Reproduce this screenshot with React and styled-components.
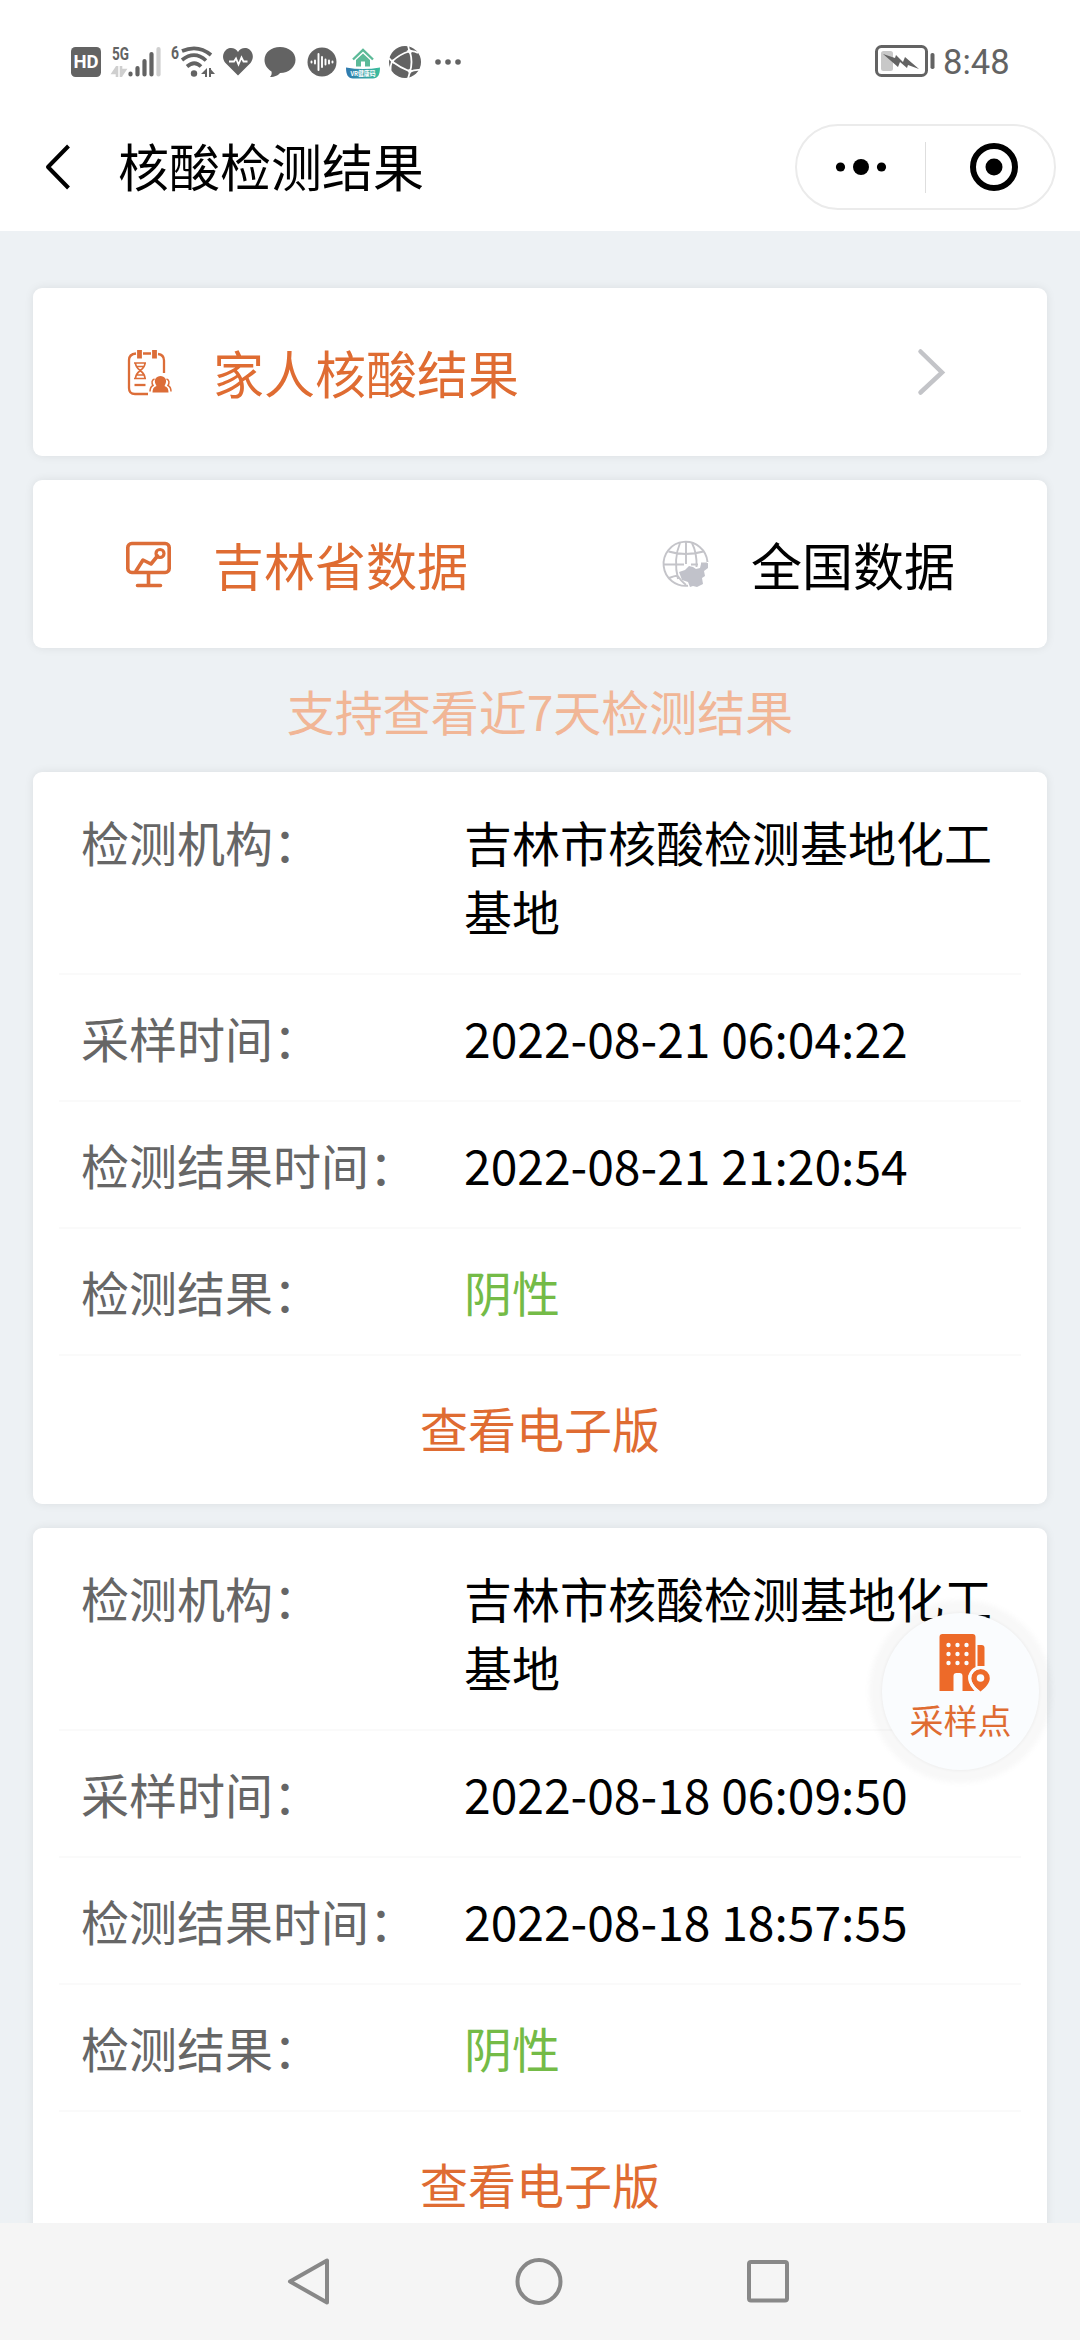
import React from 'react';
import styled, { createGlobalStyle } from 'styled-components';

const GlobalStyle = createGlobalStyle`
  * {
    box-sizing: border-box;
  }

  body {
    margin: 0;
    background: #edf1f4;
    font-family: 'Noto Sans CJK SC', 'Noto Sans', sans-serif;
  }

  svg {
    display: block;
    flex-shrink: 0;
    overflow: visible;
  }
`;

const ORANGE = '#df6c32';
const STATUS_GREY = '#636363';

const Screen = styled.div`
  width: 1080px;
  height: 2340px;
  display: flex;
  flex-direction: column;
  overflow: hidden;
`;

// Status bar
const StatusBar = styled.div`
  height: 104px;
  flex-shrink: 0;
  display: flex;
  justify-content: space-between;
  padding: 40px 70px 0 70px;
  background: #fff;
`;

const StatusGroup = styled.div`
  height: 44px;
  display: flex;
  align-items: center;
`;

const StatusItem = styled.div`
  margin-left: ${props => props.$space || 0}px;
`;

const Clock = styled.span`
  width: 67px;
  margin-left: 8px;
  font-family: Roboto, sans-serif;
  font-size: 34.5px;
  line-height: 44px;
  color: ${STATUS_GREY};
`;

// Title bar
const TitleBar = styled.header`
  height: 127px;
  flex-shrink: 0;
  display: flex;
  align-items: flex-start;
  padding: 20px 24px 0 44px;
  background: #fff;
`;

const BackIcon = styled.svg`
  margin-top: 19px;
`;

const Title = styled.h1`
  flex: 1;
  margin: 4px 0 0 46px;
  font-size: 51px;
  font-weight: 400;
  line-height: 74px;
  color: #000;
`;

const Capsule = styled.div`
  width: 261px;
  height: 86px;
  display: flex;
  align-items: center;
  border: 2px solid #ebebeb;
  border-radius: 43px;
`;

const CapsuleButton = styled.div`
  width: 128px;
  display: flex;
  justify-content: center;
  padding-left: ${props => props.$shift || 0}px;
`;

const CapsuleDivider = styled.div`
  width: 1px;
  height: 51px;
  background: #dedede;
`;

// Page content
const Content = styled.main`
  flex: 1;
  min-height: 0;
  overflow: hidden;
  padding: 57px 33px 0;
`;

const Card = styled.section`
  background: #fff;
  border-radius: 9px;
  box-shadow: 0 0 10px rgba(0, 0, 0, 0.08);
  margin-bottom: 24px;
`;

const EntryCard = styled(Card)`
  height: 168px;
  display: flex;
  align-items: center;
  padding: 0 101px 0 93px;
  margin-bottom: ${props => (props.$last ? 0 : 24)}px;
`;

const EntryText = styled.span`
  margin-left: 42px;
  font-size: 51px;
  line-height: 74px;
  white-space: nowrap;
  color: ${props => (props.$active ? ORANGE : '#000')};
`;

const Spacer = styled.div`
  flex: 1;
`;

const Tab = styled.div`
  display: flex;
  align-items: center;
  flex-shrink: 0;
  width: ${props => props.$width}px;
`;

const Tip = styled.p`
  margin: 0;
  height: 124px;
  font-size: 48px;
  line-height: 124px;
  text-align: center;
  color: #f1b696;
`;

const ResultCard = styled(Card)`
  height: 732px;
  padding: 7px 26px 0;
`;

const Row = styled.div`
  display: flex;
  align-items: flex-start;
  padding: 28px 22px 28px;
  border-bottom: 2px solid #fafafa;
`;

const Label = styled.div`
  width: 383px;
  flex-shrink: 0;
  font-size: 48px;
  line-height: 69px;
  color: #666;
`;

const Value = styled.div`
  flex: 1;
  font-size: 48px;
  line-height: 69px;
  color: ${props => (props.$negative ? '#74bb47' : '#000')};
`;

const ViewLink = styled.div`
  height: 142px;
  font-size: 48px;
  line-height: 142px;
  text-align: center;
  color: ${ORANGE};
`;

// Floating button
const Fab = styled.div`
  position: absolute;
  left: 882px;
  top: 1613px;
  width: 157px;
  height: 157px;
  display: flex;
  flex-direction: column;
  align-items: center;
  padding-top: 20px;
  border-radius: 50%;
  background: #fafcfe;
  box-shadow: 0 0 3px 1px rgba(0, 0, 0, 0.04), 0 0 5px 13px rgba(130, 140, 140, 0.06);
`;

const FabText = styled.span`
  margin-top: 2px;
  font-size: 34px;
  line-height: 49px;
  color: ${ORANGE};
`;

// System navigation
const NavBar = styled.nav`
  height: 117px;
  flex-shrink: 0;
  display: flex;
  justify-content: space-between;
  padding: 33px 286px 0 284px;
  background: #f5f5f5;
`;

const HdIcon = () => (
  <svg width="32" height="32" viewBox="0 0 32 32">
    <rect x="1" y="1" width="30" height="30" rx="4.5" fill={STATUS_GREY} />
    <text x="16" y="22" textAnchor="middle" fontFamily="Roboto, sans-serif" fontSize="18.5" fontWeight="700" fill="#fff">HD</text>
  </svg>
);

const SignalIcon = () => (
  <svg width="52" height="34" viewBox="0 0 52 34">
    <text x="1" y="15" fontFamily="Roboto, sans-serif" fontSize="18" fontWeight="700" textLength="17" lengthAdjust="spacingAndGlyphs" fill={STATUS_GREY}>5G</text>
    <path d="M6 21v11M6 22l-4 6h4M10 32V21M10 31l4-6h-4" stroke="#cfcfcf" strokeWidth="2.6" fill="none" />
    <g stroke={STATUS_GREY} strokeWidth="4.2" strokeLinecap="round">
      <path d="M19.5 28.500v1M26.500 23v6.500M33.500 16v13.500M40.500 9v20.500" />
      <path d="M47.500 4v25.500" stroke="#cfcfcf" />
    </g>
  </svg>
);

const WifiIcon = () => (
  <svg width="45" height="34" viewBox="0 0 45 34">
    <text x="0" y="14" fontFamily="Roboto, sans-serif" fontSize="18" fontWeight="700" textLength="8" lengthAdjust="spacingAndGlyphs" fill={STATUS_GREY}>6</text>
    <g fill="none" stroke={STATUS_GREY} strokeWidth="3.700">
      <path d="M11 6Q27-1 40 10" />
      <path d="M11 15Q23.500 5 35 15.500" />
      <path d="M16 21.500Q23.500 15 30 21.500" />
    </g>
    <circle cx="23" cy="28.500" r="3.200" fill={STATUS_GREY} />
    <path d="M36 23v9h-2v-3h-4zM38 23v9h2v-3h4l-4-4.500v-1.500z" fill={STATUS_GREY} />
  </svg>
);

const HeartIcon = () => (
  <svg width="32" height="30" viewBox="0 0 32 30">
    <path d="M16 28.500 3.500 16C-2 9 3 1 9 1c3 0 5.500 1.500 7 4 1.500-2.500 4-4 7-4 6 0 11 8 5.500 15z" fill={STATUS_GREY} />
    <path d="M7 14.500h5l2-3 2.500 6 3-7 2 4h4" fill="none" stroke="#fff" strokeWidth="1.800" />
  </svg>
);

const ChatIcon = () => (
  <svg width="32" height="32" viewBox="0 0 32 32">
    <path d="M16 1c9 0 15.500 5.500 15.500 12.800C31.500 21 25 27 16 27c-1.500 2-5 4-10 4 1.500-1.500 2-3.500 1.500-5.500C3.500 23 .5 19 .5 14 .5 6.500 7 1 16 1z" fill={STATUS_GREY} />
  </svg>
);

const WaveIcon = () => (
  <svg width="30" height="30" viewBox="0 0 30 30">
    <circle cx="15" cy="15" r="14.500" fill={STATUS_GREY} />
    <path d="M4.500 14.500v1M8 13.500v3M11.500 7v16M15 10v10M18.500 12.500v5M22 13.500v3M25.500 14.500v1" stroke="#fff" strokeWidth="1.900" strokeLinecap="round" />
  </svg>
);

const HouseIcon = () => (
  <svg width="36" height="34" viewBox="0 0 36 34">
    <defs>
      <linearGradient id="house" x1="0" y1="0" x2="1" y2="0">
        <stop offset="0" stopColor="#2f78b0" />
        <stop offset="1" stopColor="#3bbf9c" />
      </linearGradient>
    </defs>
    <path d="M8 14.500 18 5l10 9.500" fill="none" stroke="#5cba98" strokeWidth="2.400" />
    <path d="M18 8.500l7 6.500v6.500h-5v-5h-4v5h-5V15z" fill="#5cba98" />
    <path d="M1 22.500q17 3 34 0c0 7-2 11-7 11H8c-5 0-7-4-7-11z" fill="url(#house)" />
    <text x="18" y="31" textAnchor="middle" fontFamily="Noto Sans CJK SC, sans-serif" fontSize="6.500" fontWeight="700" textLength="25" lengthAdjust="spacingAndGlyphs" fill="#fff">VR健康码</text>
  </svg>
);

const BallIcon = () => (
  <svg width="34" height="34" viewBox="0 0 34 34">
    <circle cx="17" cy="17" r="16" fill={STATUS_GREY} />
    <g fill="none" stroke="#fff" strokeWidth="1.800">
      <path d="M20 .5q1 3 1 6M21 6.500Q12 9 4 16.500L1 13M21 6.500q5-1 9 1.500M22 7q3 10 0 19.500M4 16.500q8 6 18 10M4 16.500q-2 5-1.500 9M22 26.500q5-2 10-1.500M22 26.500q-1 4-2 7" />
    </g>
    <path d="M18.500 6l3-2 3.500 2-3 3zM2 15l4-.5-.5 4.500zM19 25l3-1 3 2-3.500 3z" fill="#fff" />
  </svg>
);

const MoreIcon = () => (
  <svg width="28" height="8" viewBox="0 0 28 8">
    <g fill={STATUS_GREY}>
      <circle cx="4" cy="4" r="2.800" />
      <circle cx="14" cy="4" r="2.800" />
      <circle cx="24" cy="4" r="2.800" />
    </g>
  </svg>
);

const BatteryIcon = () => (
  <svg width="60" height="34" viewBox="0 0 60 34">
    <rect x="1.500" y="1.500" width="50" height="29" rx="5" fill="none" stroke={STATUS_GREY} strokeWidth="3" />
    <rect x="6" y="6" width="12" height="20" rx="2.500" fill="#c8c8c8" />
    <path d="M8 9l12 4 1-3 7 7 2-5 14 12-11-4-1 3-7-6-2 5z" fill={STATUS_GREY} />
    <rect x="55.500" y="8" width="4" height="16" rx="1.800" fill={STATUS_GREY} />
  </svg>
);

const ReportIcon = () => (
  <svg width="45" height="46" viewBox="0 0 45 46" fill="none" stroke="#dc6d38" strokeWidth="2.300">
    <path d="M10 4.500C5.500 5 3 7 3 11v28c0 4 2.500 6 6 6H22M17 4.500h8M32 5c4 .5 6 3 6 6.500V24" />
    <path d="M13.500 1v8.500M28.500 1v8.500" strokeWidth="4.800" />
    <path d="M8 14h12M8 29.500h12M9.500 14c0 8 9.500 7 9.500 15.500M19 14c0 8-9.500 7-9.500 15.500M11 17.500h7M11 26h7" strokeWidth="1.700" />
    <path d="M8.500 36h11" />
    <path d="M30 36c-3-5.500.5-9 4.500-9s7.500 3.500 4.500 9l-.5 1c3 1 4 3 4 6.500h-16c0-3.500 1-5.500 4-6.500z" fill="#dc6d38" stroke="none" />
    <path d="M28.500 30c-3 1-3 4-1.500 6.500-2 1-3 3-3 6M40.500 30c3 1 3 4 1.500 6.500 2 1 3 3 3 6" strokeWidth="1.500" />
  </svg>
);

const BoardIcon = () => (
  <svg width="45" height="46" viewBox="0 0 45 46" fill="none" stroke="#dc6d38" strokeWidth="3.600" strokeLinecap="round">
    <rect x="1.800" y="2.500" width="41.400" height="29" rx="4" />
    <path d="M10 30l7-11 8 4 6.500-8M22.500 32v12M11.500 44.500h23" strokeLinejoin="round" />
    <circle cx="34" cy="12.500" r="4" strokeWidth="3.200" />
  </svg>
);

const GlobeIcon = () => (
  <svg width="46" height="46" viewBox="0 0 46 46" fill="none" stroke="#c4c4c9" strokeWidth="1.900">
    <path d="M44.500 21A22 22 0 1 0 25 44.700" />
    <path d="M1 23.500h20M28 23.500h7M38 22.500h6M5.500 10.500q17 5 35 0M23 1v22M17 2c-5 12-5 24-2 36M29 2c4 8 5 14 4.500 24M6 37q5-2 9-2.500M14 34q4 6 9 10" />
    <path d="M16 31l6-2 4-4 4 1 3 2 4-1 1-4 7-1v5l-4 3 1 5-3 2 1 6-6 3-4-1-3 1-2-5-6-2z" fill="#c1c2ca" stroke="none" />
  </svg>
);

const BuildingIcon = () => (
  <svg width="43" height="60" viewBox="5 0 43 60">
    <g transform="translate(4.500 0)">
      <g fill="#ed6a29">
        <path d="M1 4c0-2 1-3 3-3h30c2 0 3 1 3 3v32c-3 1-5 3-7 6-1 5 2 11 6 16H24V43q0-3-3-3h-3q-3 0-3 3v15H1z" />
        <path d="M39 12h4c2 0 3 1 3 3v18h-7z" />
        <path d="M42 36a9.300 9.300 0 0 1 9.300 9.300C51.300 50 47 55 42 58.500 37 55 32.700 50 32.700 45.300A9.300 9.300 0 0 1 42 36z" />
      </g>
      <path d="M42 34.500a10.800 10.800 0 0 0-10.800 10.800C31.200 51 35.500 55.500 40 59" fill="none" stroke="#fafcfe" strokeWidth="3" />
      <g fill="#fafcfe">
        {[12, 21, 30].map(y => [10, 19, 28].map(x => <circle key={`${x}-${y}`} cx={x} cy={y} r="2.200" />))}
        <circle cx="42" cy="45" r="3.800" />
      </g>
    </g>
  </svg>
);

const results = [
  {
    org: '吉林市核酸检测基地化工基地',
    sampled: '2022-08-21 06:04:22',
    reported: '2022-08-21 21:20:54',
    result: '阴性',
  },
  {
    org: '吉林市核酸检测基地化工基地',
    sampled: '2022-08-18 06:09:50',
    reported: '2022-08-18 18:57:55',
    result: '阴性',
  },
];

const Result = ({ item }) => (
  <ResultCard>
    <Row>
      <Label>检测机构：</Label>
      <Value>{item.org}</Value>
    </Row>
    <Row>
      <Label>采样时间：</Label>
      <Value>{item.sampled}</Value>
    </Row>
    <Row>
      <Label>检测结果时间：</Label>
      <Value>{item.reported}</Value>
    </Row>
    <Row>
      <Label>检测结果：</Label>
      <Value $negative>{item.result}</Value>
    </Row>
    <ViewLink>查看电子版</ViewLink>
  </ResultCard>
);

const App = () => {
  return (
    <Screen>
      <GlobalStyle />
      <StatusBar>
        <StatusGroup>
          <StatusItem><HdIcon /></StatusItem>
          <StatusItem $space={9}><SignalIcon /></StatusItem>
          <StatusItem $space={8}><WifiIcon /></StatusItem>
          <StatusItem $space={6}><HeartIcon /></StatusItem>
          <StatusItem $space={10}><ChatIcon /></StatusItem>
          <StatusItem $space={11}><WaveIcon /></StatusItem>
          <StatusItem $space={8}><HouseIcon /></StatusItem>
          <StatusItem $space={7}><BallIcon /></StatusItem>
          <StatusItem $space={12}><MoreIcon /></StatusItem>
        </StatusGroup>
        <StatusGroup>
          <BatteryIcon />
          <Clock>8:48</Clock>
        </StatusGroup>
      </StatusBar>

      <TitleBar>
        <BackIcon width="28" height="48" viewBox="0 0 28 48" fill="none" stroke="#000" strokeWidth="4">
          <path d="M24.500 3 4 24l20.500 21" strokeLinejoin="round" />
        </BackIcon>
        <Title>核酸检测结果</Title>
        <Capsule>
          <CapsuleButton>
            <svg width="52" height="18" viewBox="0 0 52 18">
              <circle cx="5.500" cy="9" r="4.600" />
              <circle cx="26" cy="9" r="8" />
              <circle cx="46.500" cy="9" r="4.600" />
            </svg>
          </CapsuleButton>
          <CapsuleDivider />
          <CapsuleButton $shift={7}>
            <svg width="50" height="50" viewBox="0 0 50 50">
              <circle cx="25" cy="25" r="21" fill="none" stroke="#000" strokeWidth="6" />
              <circle cx="25" cy="25" r="8.500" />
            </svg>
          </CapsuleButton>
        </Capsule>
      </TitleBar>

      <Content>
        <EntryCard>
          <ReportIcon />
          <EntryText $active>家人核酸结果</EntryText>
          <Spacer />
          <svg width="28" height="46" viewBox="0 0 28 46" fill="none" stroke="#c3c4c8" strokeWidth="4.500">
            <path d="M2.500 2.500 24 23.500 2.500 43.500" strokeLinecap="round" />
          </svg>
        </EntryCard>
        <EntryCard $last>
          <Tab $width={537}>
            <BoardIcon />
            <EntryText $active>吉林省数据</EntryText>
          </Tab>
          <GlobeIcon />
          <EntryText>全国数据</EntryText>
        </EntryCard>
        <Tip>支持查看近7天检测结果</Tip>
        {results.map(item => (
          <Result key={item.sampled} item={item} />
        ))}
      </Content>

      <Fab>
        <BuildingIcon />
        <FabText>采样点</FabText>
      </Fab>

      <NavBar>
        <svg width="50" height="52" viewBox="0 0 50 52" fill="none" stroke="#888" strokeWidth="4" strokeLinejoin="round">
          <path d="M43 4.500v42L6 25.500z" />
        </svg>
        <svg width="50" height="52" viewBox="0 0 50 52" fill="none" stroke="#888" strokeWidth="4">
          <circle cx="25" cy="25.500" r="21.500" />
        </svg>
        <svg width="50" height="52" viewBox="0 0 50 52" fill="none" stroke="#888" strokeWidth="4">
          <rect x="5" y="6" width="38" height="38.500" rx="2" />
        </svg>
      </NavBar>
    </Screen>
  );
};

export default App;
